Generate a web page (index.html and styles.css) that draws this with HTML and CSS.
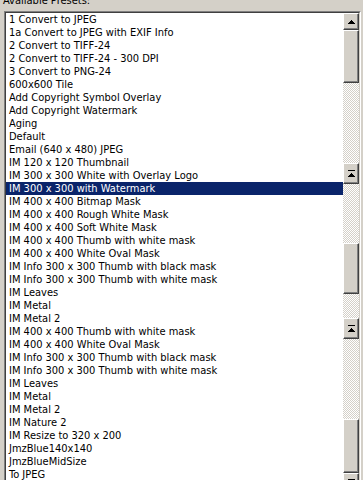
FILE: index.html
```html
<!DOCTYPE html>
<html lang="en">
<head>
    <meta charset="UTF-8">
    <title>Available Presets</title>
    <link rel="stylesheet" href="styles.css">
</head>
<body>
    <div class="caption">Available Presets:</div>

    <div class="listbox">
        <!-- preset names -->
        <div class="items">
            <div class="item">1 Convert to JPEG</div>
            <div class="item">1a Convert to JPEG with EXIF Info</div>
            <div class="item">2 Convert to TIFF-24</div>
            <div class="item">2 Convert to TIFF-24 - 300 DPI</div>
            <div class="item">3 Convert to PNG-24</div>
            <div class="item">600x600 Tile</div>
            <div class="item">Add Copyright Symbol Overlay</div>
            <div class="item">Add Copyright Watermark</div>
            <div class="item">Aging</div>
            <div class="item">Default</div>
            <div class="item">Email (640 x 480) JPEG</div>
            <div class="item">IM 120 x 120 Thumbnail</div>
            <div class="item">IM 300 x 300 White with Overlay Logo</div>
            <div class="item selected">IM 300 x 300 with Watermark</div>
            <div class="item">IM 400 x 400 Bitmap Mask</div>
            <div class="item">IM 400 x 400 Rough White Mask</div>
            <div class="item">IM 400 x 400 Soft White Mask</div>
            <div class="item">IM 400 x 400 Thumb with white mask</div>
            <div class="item">IM 400 x 400 White Oval Mask</div>
            <div class="item">IM Info 300 x 300 Thumb with black mask</div>
            <div class="item">IM Info 300 x 300 Thumb with white mask</div>
            <div class="item">IM Leaves</div>
            <div class="item">IM Metal</div>
            <div class="item">IM Metal 2</div>
            <div class="item">IM 400 x 400 Thumb with white mask</div>
            <div class="item">IM 400 x 400 White Oval Mask</div>
            <div class="item">IM Info 300 x 300 Thumb with black mask</div>
            <div class="item">IM Info 300 x 300 Thumb with white mask</div>
            <div class="item">IM Leaves</div>
            <div class="item">IM Metal</div>
            <div class="item">IM Metal 2</div>
            <div class="item">IM Nature 2</div>
            <div class="item">IM Resize to 320 x 200</div>
            <div class="item">JmzBlue140x140</div>
            <div class="item">JmzBlueMidSize</div>
            <div class="item">To JPEG</div>
        </div>

        <!-- scrollbar (redraw leftovers included) -->
        <div class="scrollbar">
            <div class="btn btn-up">
                <svg width="7" height="4" viewBox="0 0 7 4"><path d="M3 0h1v1h1v1h1v1h1v1H0V3h1V2h1V1h1z" fill="#000"/></svg>
            </div>
            <div class="thumb thumb-1"></div>
            <div class="track track-1"></div>
            <div class="btn btn-top">
                <svg width="7" height="7" viewBox="0 0 7 7"><rect x="0" y="0" width="7" height="1" fill="#000"/><path d="M3 3h1v1h1v1h1v1h1v1H0V6h1V5h1V4h1z" fill="#000"/></svg>
            </div>
            <div class="track track-2"></div>
            <div class="thumb thumb-2"></div>
            <div class="track track-3"></div>
            <div class="btn btn-top">
                <svg width="7" height="7" viewBox="0 0 7 7"><rect x="0" y="0" width="7" height="1" fill="#000"/><path d="M3 3h1v1h1v1h1v1h1v1H0V6h1V5h1V4h1z" fill="#000"/></svg>
            </div>
            <div class="track track-4"></div>
            <div class="thumb thumb-3"></div>
            <div class="btn btn-down">
                <svg width="7" height="4" viewBox="0 0 7 4"><path d="M0 0h7v1H6v1H5v1H4v1H3V3H2V2H1V1H0z" fill="#000"/></svg>
            </div>
        </div>
    </div>
</body>
</html>
```

FILE: styles.css
```css
body {
    margin: 0;
    height: 480px;
    overflow: hidden;
    background-color: #d4d0c8;
    font-family: "DejaVu Sans Condensed", "Liberation Sans", Arial, sans-serif;
    font-size: 11px;
    color: #000;
}
.caption {
    height: 10px;
    padding-top: 1px;
    line-height: 0;
    padding-left: 3px;
    white-space: nowrap;
}
.listbox {
    display: flex;
    width: 355px;
    margin-left: 4px;
    border-top: 1px solid #808080;
    border-left: 1px solid #808080;
    border-right: 1px solid #fff;
    background-color: #fff;
}
.items {
    flex: 1;
    border-top: 1px solid #404040;
    border-left: 1px solid #404040;
    min-width: 0;
}
.item {
    height: 13px;
    line-height: 13px;
    padding-left: 3px;
    white-space: nowrap;
    overflow: hidden;
}
.item.selected {
    background-color: #0a246a;
    color: #fff;
}
.scrollbar {
    width: 16px;
    display: flex;
    flex-direction: column;
    border-top: 1px solid #404040;
    border-right: 1px solid #d4d0c8;
}
.btn, .thumb {
    box-sizing: border-box;
    background-color: #d4d0c8;
    border-top: 1px solid #fff;
    border-left: 1px solid #fff;
    border-right: 1px solid #404040;
    border-bottom: 1px solid #404040;
    box-shadow: inset -1px -1px 0 #808080;
    flex-shrink: 0;
}
.btn {
    display: flex;
    align-items: center;
    justify-content: center;
}
.btn svg {
    display: block;
}
.btn-up {
    height: 17px;
}
.btn-down {
    height: 16px;
}
.btn-top {
    height: 21px;
}
.track {
    flex-shrink: 0;
    background: repeating-conic-gradient(#fff 0 25%, #d4d0c8 0 50%) 0 0 / 2px 2px;
}
.thumb-1 { height: 53px; }
.track-1 { height: 80px; }
.track-2 { height: 59px; }
.thumb-2 { height: 51px; }
.track-3 { height: 24px; }
.track-4 { height: 80px; }
.thumb-3 { height: 54px; }
```
